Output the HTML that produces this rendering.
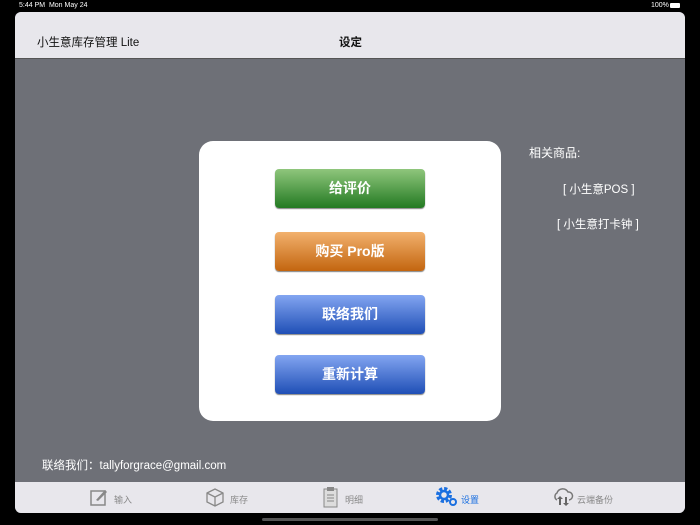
<!DOCTYPE html>
<html><head><meta charset="utf-8"><style>
body{margin:0;width:700px;height:525px;background:#000;position:relative;overflow:hidden;font-family:"Liberation Sans","Noto Sans CJK SC",sans-serif}
.abs{position:absolute}
.screen{left:15px;top:12px;width:670px;height:501px;border-radius:6px;overflow:hidden;background:#6e7077}
.nav{left:0;top:0;width:670px;height:46px;background:#e8e7ec;border-bottom:1px solid #555}
.card{left:184px;top:129px;width:302px;height:280px;background:#fff;border-radius:14px}
.btn{left:76px;width:150px;height:39px;border-radius:4px;color:#fff;font-size:14px;font-weight:bold;text-align:center;line-height:39px;box-shadow:0 1px 1px rgba(0,0,0,.5)}
.g{background:linear-gradient(#8fc67c,#237a22)}
.o{background:linear-gradient(#f2b16d,#c3650f)}
.b{background:linear-gradient(#83a5f1,#1f4fb6)}
.tab{left:0;top:470px;width:670px;height:31px;background:#e8e7ec}
.ti{font-size:9px;color:#8a8a8a}
</style></head><body>
<div class="abs" style="left:19px;top:2px;color:#fff;font-size:7px">5:44 PM&nbsp;&nbsp;Mon May 24</div>
<div class="abs" style="left:651px;top:2px;color:#fff;font-size:7px">100%</div>
<div class="abs" style="left:670px;top:3px;width:10px;height:5px;background:#fff;border-radius:1px"></div>
<div class="abs screen">
 <div class="abs nav">
  <div class="abs" style="left:22px;top:22px;font-size:11.5px;color:#111">小生意库存管理 Lite</div>
  <div class="abs" style="left:324px;top:22px;font-size:11.5px;font-weight:bold;color:#111">设定</div>
 </div>
 <div class="abs card">
  <div class="abs btn g" style="top:28px">给评价</div>
  <div class="abs btn o" style="top:91px">购买 Pro版</div>
  <div class="abs btn b" style="top:154px">联络我们</div>
  <div class="abs btn b" style="top:214px">重新计算</div>
 </div>
 <div class="abs" style="left:514px;top:132px;color:#fff;font-size:12px">相关商品:</div>
 <div class="abs" style="left:548px;top:169px;color:#fff;font-size:11.5px">[ 小生意POS ]</div>
 <div class="abs" style="left:542px;top:204px;color:#fff;font-size:11.5px">[ 小生意打卡钟 ]</div>
 <div class="abs" style="left:27px;top:445px;color:#fff;font-size:11.5px">联络我们：tallyforgrace@gmail.com</div>
 <div class="abs tab">
  <svg class="abs" style="left:75px;top:6px" width="18" height="18"><rect x="1" y="3" width="14" height="14" fill="none" stroke="#888" stroke-width="1.5"/><path d="M6 12 L15 2 L17 4 L8 13 Z" fill="#888"/></svg>
  <div class="abs ti" style="left:99px;top:11px">输入</div>
  <svg class="abs" style="left:190px;top:5px" width="20" height="20"><path d="M2 6 L10 2 L18 6 L18 15 L10 19 L2 15 Z M2 6 L10 10 L18 6 M10 10 L10 19" fill="none" stroke="#888" stroke-width="1.3"/></svg>
  <div class="abs ti" style="left:215px;top:11px">库存</div>
  <svg class="abs" style="left:308px;top:4px" width="16" height="22"><rect x="1" y="3" width="13" height="18" fill="#ddd" stroke="#888"/><rect x="4" y="1" width="7" height="4" fill="#888"/><path d="M4 9h7M4 12h7M4 15h7" stroke="#888"/></svg>
  <div class="abs ti" style="left:330px;top:11px">明细</div>
  <svg class="abs" style="left:420px;top:4px" width="24" height="22"><circle cx="9" cy="9" r="6" fill="none" stroke="#1a6fe0" stroke-width="4" stroke-dasharray="3 1.7"/><circle cx="9" cy="9" r="4" fill="none" stroke="#1a6fe0" stroke-width="2.5"/><circle cx="18" cy="16" r="3" fill="none" stroke="#1a6fe0" stroke-width="2"/></svg>
  <div class="abs ti" style="left:446px;top:11px;color:#1a6fe0">设置</div>
  <svg class="abs" style="left:537px;top:4px" width="22" height="22"><path d="M5 14 A4 4 0 0 1 5 7 A6 6 0 0 1 16 6 A4 4 0 0 1 17 14" fill="none" stroke="#777" stroke-width="1.5"/><path d="M8 10 L5 13 H7 V19 H9 V13 H11 Z M13 11 V17 H11 L14 20 L17 17 H15 V11 Z" fill="#666"/></svg>
  <div class="abs ti" style="left:562px;top:11px">云端备份</div>
 </div>
</div>
<div class="abs" style="left:262px;top:518px;width:176px;height:3px;border-radius:2px;background:#555"></div>
</body></html>
